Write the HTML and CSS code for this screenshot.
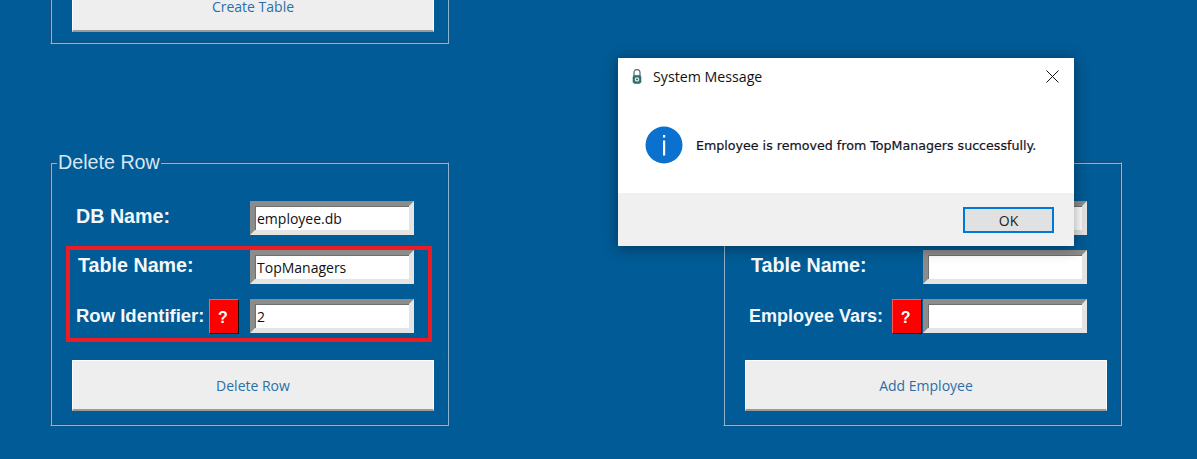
FILE: index.html
```html
<!DOCTYPE html>
<html lang="en">
<head>
<meta charset="utf-8">
<title>System Message</title>
<link rel="stylesheet" href="styles.css">
</head>
<body>
<main class="page">
  <fieldset class="panel panel-top">
    <button class="action" type="button">Create Table</button>
  </fieldset>

  <fieldset class="panel panel-left">
    <legend>Delete Row</legend>
    <div class="row"><label class="label wide">DB Name:</label><input class="entry" value="employee.db"></div>
    <div class="row"><label class="label wide nudge">Table Name:</label><input class="entry" value="TopManagers"></div>
    <div class="row"><label class="label mid">Row Identifier:</label><button class="help" type="button">?</button><input class="entry" value="2"></div>
    <button class="action" type="button">Delete Row</button>
    <div class="highlight"></div>
  </fieldset>

  <fieldset class="panel panel-right">
    <legend>Add Employee</legend>
    <div class="row"><label class="label wide">DB Name:</label><input class="entry"></div>
    <div class="row"><label class="label wide nudge">Table Name:</label><input class="entry"></div>
    <div class="row"><label class="label">Employee Vars:</label><button class="help help-right" type="button">?</button><input class="entry"></div>
    <button class="action" type="button">Add Employee</button>
  </fieldset>
</main>

<section class="dialog">
  <header class="dialog-title">
    <svg class="lock" width="12" height="15" viewBox="0 0 12 15">
      <path d="M3 7V3.500a3 3 0 0 1 6 0V7" fill="none" stroke="#5d747c" stroke-width="1.300"/>
      <rect x="2" y="6.400" width="8" height="8" rx="1.800" fill="#2b7473" stroke="#3c5a60" stroke-width=".6"/>
      <circle cx="6" cy="10.400" r="2.200" fill="#e8f0f0"/>
      <circle cx="6" cy="10.400" r=".9" fill="#274b50"/>
    </svg>
    <span class="dialog-name">System Message</span>
    <svg class="close" width="13" height="13" viewBox="0 0 13 13">
      <path d="M.5.5l12 12M12.500.5l-12 12" stroke="#111" stroke-width="1" fill="none"/>
    </svg>
  </header>
  <div class="dialog-body">
    <svg class="info" width="38" height="38" viewBox="0 0 38 38">
      <circle cx="19" cy="19" r="18.500" fill="#0a71cf"/>
      <rect x="18" y="9" width="2.200" height="2.600" fill="#fff"/>
      <rect x="18" y="14.500" width="2.200" height="15" fill="#fff"/>
    </svg>
    <p class="message">Employee is removed from TopManagers successfully.</p>
  </div>
  <footer class="dialog-foot">
    <button class="ok" type="button">OK</button>
  </footer>
</section>
</body>
</html>
```
FILE: styles.css
```css
* { box-sizing: border-box; }
html, body { margin: 0; height: 100%; }
body {
  position: relative;
  height: 459px;
  overflow: hidden;
  background: #005b96;
}
.page {
  display: grid;
  grid-template-columns: 399px 399px;
  column-gap: 274px;
  row-gap: 108px;
  padding-left: 50px;
  margin-top: -19px;
}
.panel {
  position: relative;
  min-width: 0;
  margin: 0;
  padding: 28px 14px 14px 21px;
  border: 1px solid;
  border-color: #1f4d75 #8fb4d0 #8fb4d0 #1f4d75;
  box-shadow: inset 1px 1px 0 #8fb4d0, inset -1px -1px 0 #1f4d75;
}
.panel-top {
  grid-column: 1;
  grid-row: 1;
  padding-top: 0;
  padding-bottom: 11px;
  border-top: 0;
}
.panel-left { grid-column: 1; grid-row: 2; }
.panel-right { grid-column: 2; grid-row: 2; }
legend {
  margin-left: -15px;
  padding: 0 1px;
  background: #005b96;
  color: #d7e6f1;
  font: 19.700px/21px "Liberation Sans", Arial, sans-serif;
}
.row {
  display: flex;
  align-items: center;
  height: 34px;
  margin: 0 20px 15px 0;
  padding-left: 4px;
}
.label {
  color: #f4f8fb;
  font: bold 18px "Liberation Sans", Arial, sans-serif;
  white-space: nowrap;
}
.wide { font-size: 19.700px; margin-bottom: 3px; }
.mid { font-size: 18.500px; }
.nudge { margin-left: 2px; }
.entry {
  width: 164px;
  height: 34px;
  margin-left: auto;
  padding: 1px 2px 0;
  border: 5px solid;
  border-color: #8c8c8c #e4e4e4 #e4e4e4 #8c8c8c;
  border-radius: 0;
  background: #fff;
  box-shadow: inset 1px 1px 0 #6f6f6f;
  color: #111;
  font: 14px "Open Sans", sans-serif;
  outline: 0;
}
.help {
  width: 30px;
  height: 35px;
  margin-left: 5px;
  padding: 3px 3px 0 0;
  border: 1px solid;
  border-color: #ff5a5a #111 #111 #ff5a5a;
  background: #f00;
  color: #fff;
  font: bold 16px "Liberation Sans", Arial, sans-serif;
}
.help-right { margin-left: 9px; }
.action {
  display: block;
  width: 362px;
  height: 51px;
  margin-top: 27px;
  padding: 0;
  border: 1px solid;
  border-width: 1px 1px 2px;
  border-color: #fff #fff #9a9a9a #fff;
  background: #eee;
  color: #2a6ea8;
  font: 14px "Open Sans", sans-serif;
}
.panel-top .action { margin-top: 0; }
.highlight {
  position: absolute;
  left: 15px;
  top: 73px;
  width: 366px;
  height: 96px;
  border: 4px solid #ed1c24;
}
.dialog {
  position: absolute;
  left: 618px;
  top: 58px;
  width: 456px;
  height: 188px;
  display: flex;
  flex-direction: column;
  background: #fff;
  box-shadow: 0 2px 14px rgba(0, 0, 0, .4);
}
.dialog-title {
  display: flex;
  align-items: center;
  height: 37px;
  padding: 0 15px 0 13px;
}
.lock { flex: none; }
.dialog-name {
  margin-left: 10px;
  color: #111;
  font: 14.200px "Open Sans", sans-serif;
}
.close { margin-left: auto; }
.dialog-body {
  flex: 1;
  display: flex;
  align-items: center;
  padding: 2px 0 0 27px;
}
.message {
  margin: 0 0 0 13px;
  color: #14141f;
  font: 12.650px "DejaVu Sans", sans-serif;
  -webkit-text-stroke: .2px #14141f;
  white-space: nowrap;
}
.dialog-foot {
  display: flex;
  justify-content: flex-end;
  align-items: flex-start;
  height: 53px;
  padding: 14px 20px 0 0;
  background: #f0f0f0;
}
.ok {
  width: 91px;
  height: 26px;
  padding: 0;
  border: 2px solid #0078d7;
  background: #e1e1e1;
  color: #222;
  font: 14px "Open Sans", sans-serif;
}
```
